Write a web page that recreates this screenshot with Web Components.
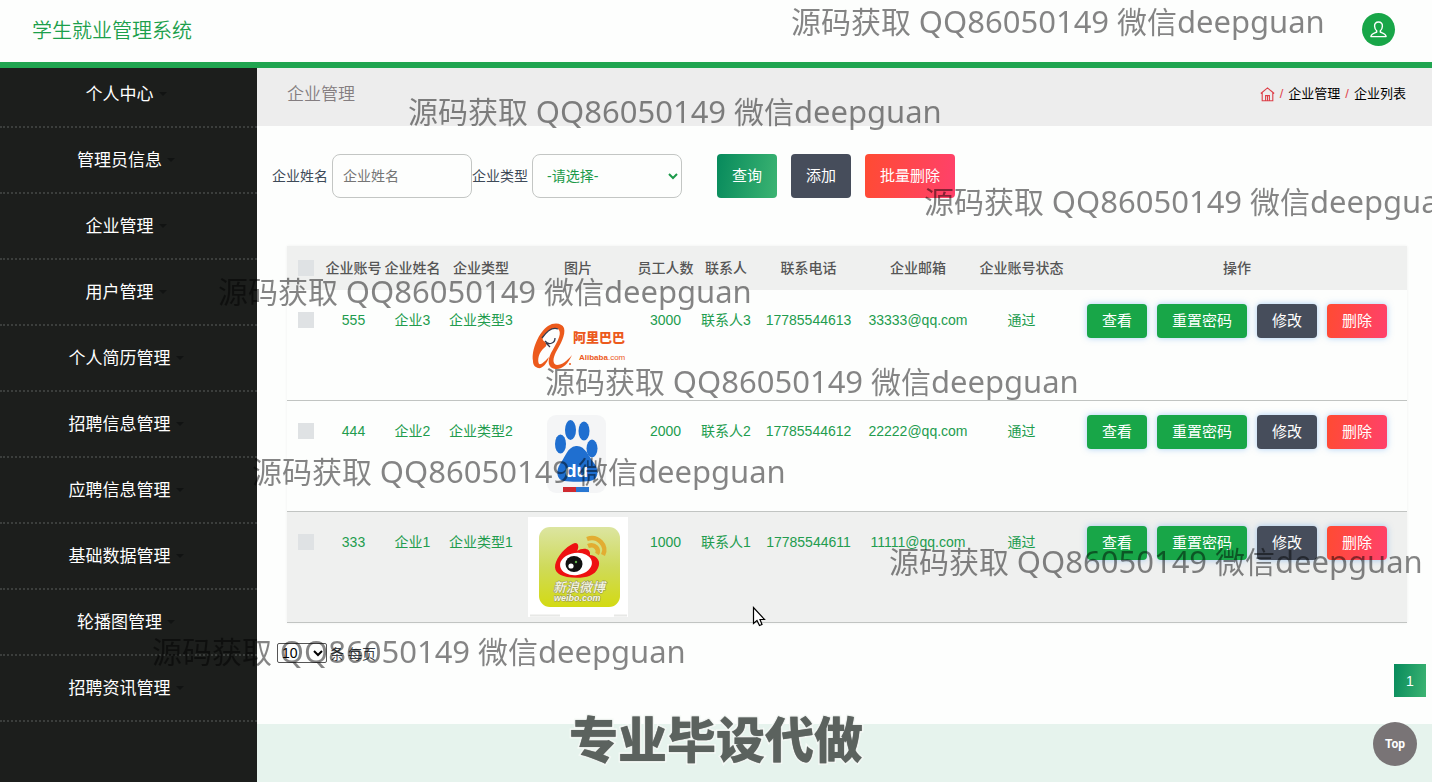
<!DOCTYPE html>
<html lang="zh-CN">
<head>
<meta charset="utf-8">
<title>学生就业管理系统</title>
<style>
html, body { margin: 0; }
body {
  font-family: "Liberation Sans", "Noto Sans CJK SC", sans-serif;
  font-size: 14px;
  background: #fdfefd;
}
</style>
</head>
<body>
<job-app></job-app>

<script>
const define = (name, html, setup) => {
  const template = document.createElement('template');
  template.innerHTML = html;
  customElements.define(name, class extends HTMLElement {
    connectedCallback() {
      if (this.shadowRoot) return;
      const root = this.attachShadow({ mode: 'open' });
      root.append(template.content.cloneNode(true));
      if (setup) setup(root, this);
    }
  });
};

/* Button with a colour variant and an optional compact size */
define('app-button', `
<style>
:host { display: inline-block; --fill: #18a648; }
:host([kind="search"]) { --fill: linear-gradient(100deg, #078a5c, #3cb472); }
:host([kind="dark"]) { --fill: #464d5b; }
:host([kind="danger"]) { --fill: linear-gradient(100deg, #ff4b32, #ff416c); }
button {
  display: block; height: 44px; padding: 0 15px; border: 0; border-radius: 4px;
  background: var(--fill); color: #fff; font: inherit; font-size: 15px; line-height: 20px;
  white-space: nowrap; cursor: pointer;
}
:host([compact]) button { height: 34px; box-shadow: 0 0 6px rgba(90, 160, 240, .5); }
</style>
<button type="button"><slot></slot></button>`);

define('app-header', `
<style>
:host {
  display: flex; align-items: center; justify-content: space-between; box-sizing: border-box;
  height: 68px; padding: 0 37px 4px 32px; border-bottom: 6px solid #20a550;
}
h1 { margin: 0; padding-top: 4px; font-size: 20px; line-height: 28px; font-weight: 350; color: #1c9f4b; }
button { width: 33px; height: 33px; padding: 0; border: 0; border-radius: 50%; background: #18a648; }
svg { display: block; margin: 0 auto; }
</style>
<h1><slot></slot></h1>
<button type="button" aria-label="个人账户">
  <svg width="21" height="21" viewBox="0 0 21 21" fill="none" stroke="#fff" stroke-width="1.4" stroke-linejoin="round">
    <path d="M10.500 3C7.800 3 6.400 4.900 6.600 7.300C6.700 9.300 7.600 11 8.700 11.800V13C6.500 14 3.200 14.600 2.900 17.600H18.100C17.800 14.600 14.500 14 12.300 13V11.800C13.400 11 14.300 9.300 14.400 7.300C14.600 4.900 13.200 3 10.500 3Z"/>
  </svg>
</button>`);

define('side-item', `
<style>
:host { display: block; border-bottom: 2px dotted #3b3e3c; }
a {
  display: flex; align-items: center; justify-content: center; box-sizing: border-box; height: 64px; padding-top: 2px;
  color: #fff; font-size: 17px; line-height: 24px; text-decoration: none;
}
:host(:first-of-type) a { height: 58px; padding: 0 0 4px; }
i { margin: 0 5px 2px; border: 4px solid transparent; border-top-color: #111312; border-bottom: 0; }
</style>
<a href="#"><slot></slot><i></i></a>`);

define('side-nav', `
<style>
:host { display: block; width: 257px; flex: none; background: #1c1e1c; }
</style>
<nav></nav>`, root => {
  const nav = root.querySelector('nav');
  for (const name of ['个人中心', '管理员信息', '企业管理', '用户管理', '个人简历管理',
    '招聘信息管理', '应聘信息管理', '基础数据管理', '轮播图管理', '招聘资讯管理']) {
    const item = document.createElement('side-item');
    item.textContent = name;
    nav.append(item);
  }
});

define('page-heading', `
<style>
:host {
  display: flex; align-items: center; justify-content: space-between; box-sizing: border-box;
  height: 58px; padding: 0 26px 6px 30px; background: #ededed;
}
h2 { margin: 0; padding-top: 2px; font-size: 17px; line-height: 24px; font-weight: 350; color: #847d80; }
nav { display: flex; align-items: center; gap: 5px; font-size: 13px; line-height: 20px; color: #e0444c; }
a { color: #000; text-decoration: none; }
svg { display: block; }
</style>
<h2>企业管理</h2>
<nav aria-label="位置">
  <a href="#" aria-label="首页"><svg width="15" height="15" viewBox="0 0 15 15" fill="none" stroke="#dd3f48" stroke-width="1.1"><path d="M.8 6.500L7.500.9L14.200 6.500M2.200 5.600V13.800H12.800V5.600M5.600 13.600V8.600H9.400V13.600M7.500 8.600V13.600"/></svg></a>
  <span>/</span><a href="#">企业管理</a><span>/</span><a href="#">企业列表</a>
</nav>`);

define('search-bar', `
<style>
:host { display: block; padding: 28px 15px 48px; }
form { display: flex; align-items: center; color: #3e4a58; line-height: 20px; }
input, select {
  box-sizing: border-box; height: 44px; margin-left: 4px; border: 1px solid #c3c6c4; border-radius: 8px;
  background: #fdfefd; font: inherit; font-size: 14px;
}
input { width: 140px; padding: 0 10px; }
input::placeholder { color: #757575; }
select { width: 150px; padding: 0 0 0 10px; color: #1c9a4a; }
.actions { display: flex; gap: 14px; margin-left: 35px; }
</style>
<form>
  <label for="name">企业姓名</label><input id="name" placeholder="企业姓名">
  <label for="type">企业类型</label><select id="type"><option>-请选择-</option></select>
  <div class="actions">
    <app-button kind="search">查询</app-button>
    <app-button kind="dark">添加</app-button>
    <app-button kind="danger">批量删除</app-button>
  </div>
</form>`);

const logos = {
  alibaba: `
<svg width="100" height="100" viewBox="0 0 100 100" role="img" aria-label="阿里巴巴">
  <path d="M5 66C3 55 11 37 20 31C26 27 34 28 36 33C38 40 32 50 28 57C25 63 24 69 29 70C34 70 39 66 44 60C40 69 34 75 27 74C20 73 19 66 23 58C28 49 34 40 31 35C28 31 20 35 16 40C14 43 14 45 17 47C19 49 19 51 16 53C11 57 9 65 11 69C14 70 18 65 21 62C19 69 14 74 10 73C7 72 5 70 5 66Z" fill="#ec5a1c"/>
  <path d="M14 43C19 36 25 32 30 34M17 46Q20 50 24 48Q27 47 27 43M18 48L22 52" fill="none" stroke="#33384a" stroke-width="1.300"/>
  <circle cx="42" cy="69" r="1" fill="#ec5a1c"/>
  <text x="45" y="47" font-size="13" font-weight="900" fill="#ec5a1c">阿里巴巴</text>
  <text x="51" y="65" font-size="8" font-weight="700" fill="#ec5a1c">Alibaba<tspan font-weight="400">.com</tspan></text>
</svg>`,
  baidu: `
<svg width="100" height="100" viewBox="0 0 100 100" role="img" aria-label="百度">
  <rect x="19" y="9" width="59" height="78" rx="9" fill="#f4f5f6"/>
  <g fill="#1f6fd0">
    <ellipse cx="42.500" cy="24" rx="5.500" ry="10"/><ellipse cx="56" cy="25" rx="5.500" ry="9.500"/>
    <ellipse cx="32.500" cy="38" rx="5.500" ry="9.500"/><ellipse cx="64" cy="42.500" rx="5.500" ry="9"/>
    <path d="M48 40C57 39 61 51 66 57C72 65 70 74 62 75C54 76 43 76 36 75C28 74 28 64 32 58C37 52 39 41 48 40Z"/>
  </g>
  <text x="37" y="71" font-size="19" font-weight="700" fill="#fff">du</text>
  <rect x="35" y="81" width="13" height="5" fill="#cf2a30"/><rect x="48" y="81" width="13" height="5" fill="#2877d2"/>
</svg>`,
  weibo: `
<svg width="100" height="100" viewBox="0 0 100 100" role="img" aria-label="新浪微博">
  <defs><linearGradient id="lime" x2="0" y2="1"><stop stop-color="#dce5a1"/><stop offset=".5" stop-color="#cfda5a"/><stop offset="1" stop-color="#d3da13"/></linearGradient></defs>
  <rect width="100" height="100" fill="#fff"/>
  <rect x="11" y="10" width="81" height="80" rx="11" fill="url(#lime)"/>
  <path d="M59 22C70 18 80 29 75 38M60 29C67 26 72 33 69 37" fill="none" stroke="#e2ad32" stroke-width="4.500"/>
  <path d="M28 45C31 36 42 27 47 26C52 26 50 33 49 34C55 30 63 31 62 38C70 39 73 45 70 51C66 61 51 62 39 60C29 58 25 53 28 45Z" fill="#ee1111"/>
  <ellipse cx="48" cy="47" rx="16" ry="11" transform="rotate(-8 48 47)" fill="#fff"/>
  <ellipse cx="46" cy="47" rx="8.500" ry="8" fill="#111"/>
  <circle cx="43" cy="49" r="2.600" fill="#fff"/><circle cx="48" cy="45" r="1.200" fill="#5fb04a"/>
  <g fill="#f6f7e4" stroke="#96965e" stroke-width="1" paint-order="stroke" font-style="italic" font-weight="700">
    <text x="25" y="75" font-size="13" font-weight="500">新浪微博</text>
    <text x="26" y="84" font-size="9">weibo.com</text>
  </g>
  <path d="M2 98.500H32M86 98.500H99" stroke="#e7e8e6" stroke-width="2"/>
</svg>`
};

const companies = [
  ['555', '企业3', '企业类型3', 'alibaba', '3000', '联系人3', '17785544613', '33333@qq.com'],
  ['444', '企业2', '企业类型2', 'baidu', '2000', '联系人2', '17785544612', '22222@qq.com'],
  ['333', '企业1', '企业类型1', 'weibo', '1000', '联系人1', '17785544611', '11111@qq.com']
];

define('company-table', `
<style>
:host { display: block; margin: 0 25px 0 30px; box-shadow: 0 0 3px rgba(0, 0, 0, .06); }
table { width: 100%; table-layout: fixed; border-collapse: separate; border-spacing: 0; text-align: center; line-height: 20px; }
th { height: 44px; padding: 0; background: #eff0ef; color: #555; font-weight: 500; white-space: nowrap; }
td { height: 90px; padding: 20px 0 0; border-bottom: 1px solid #c1c4c2; vertical-align: top; color: #229c4e; white-space: nowrap; }
tbody tr:last-child td { background: #eff0ef; }
td.logo { height: 100px; padding: 5px 0; }
td.ops { height: 96px; padding: 14px 0 0; }
.buttons { display: flex; justify-content: center; gap: 10px; }
svg { display: block; margin: 0 auto; }
input { appearance: none; display: block; width: 16px; height: 16px; margin: 2px auto; background: #dfe2e4; }
</style>
<table>
  <colgroup>
    <col style="width:37px"><col style="width:59px"><col style="width:59px"><col style="width:78px">
    <col style="width:116px"><col style="width:59px"><col style="width:62px"><col style="width:103px">
    <col style="width:116px"><col style="width:91px"><col style="width:340px">
  </colgroup>
  <thead><tr>
    <th><input type="checkbox" aria-label="全选"></th><th>企业账号</th><th>企业姓名</th><th>企业类型</th><th>图片</th>
    <th>员工人数</th><th>联系人</th><th>联系电话</th><th>企业邮箱</th><th>企业账号状态</th><th>操作</th>
  </tr></thead>
  <tbody></tbody>
</table>`, root => {
  root.querySelector('tbody').innerHTML = companies.map(row => `
    <tr><td><input type="checkbox" aria-label="选择${row[1]}"></td>
    ${row.map(cell => logos[cell] ? `<td class="logo">${logos[cell]}</td>` : `<td>${cell}</td>`).join('')}
    <td>通过</td>
    <td class="ops"><div class="buttons"><app-button compact>查看</app-button><app-button compact>重置密码</app-button><app-button compact kind="dark">修改</app-button><app-button compact kind="danger">删除</app-button></div></td></tr>`).join('');
});

define('table-pager', `
<style>
:host { display: block; padding: 20px 6px 27px 20px; }
.size { display: flex; align-items: center; gap: 3px; height: 20px; margin-bottom: 1px; color: #3a3f45; }
select { box-sizing: border-box; width: 50px; height: 20px; padding: 0 3px 0 0; border: 1px solid #555; border-radius: 2px; background: #fdfefd; font: inherit; color: #000; }
.pages { display: flex; justify-content: flex-end; }
button { width: 32px; height: 33px; padding: 0; border: 0; background: linear-gradient(100deg, #078a5c, #3cb472); color: #fff; font: inherit; }
</style>
<div class="size"><select id="size"><option>10</option></select><label for="size">条 每页</label></div>
<div class="pages"><button type="button">1</button></div>`);

define('app-footer', `
<style>
:host { display: block; flex: 1; min-height: 58px; background: #e6f3ed; }
</style>
<footer></footer>`);

define('back-to-top', `
<style>
:host { display: block; position: fixed; right: 15px; bottom: 16px; }
button { display: block; width: 44px; height: 44px; padding: 0; border: 0; border-radius: 50%; background: #797476; color: #fff; font: bold 12px/20px Roboto, sans-serif; }
</style>
<button type="button"><slot></slot></button>`);

/* Translucent contact lines, the slogan and the pointer float over the page */
define('page-overlay', `
<style>
:host { position: absolute; inset: 0; overflow: hidden; pointer-events: none; }
p, strong, svg { position: absolute; margin: 0; white-space: nowrap; }
p { font: 30px/40px "Noto Sans", "Noto Sans CJK SC", sans-serif; color: rgba(0, 0, 0, .48); }
p span { font-size: 31px; }
strong {
  left: 569px; top: 711px; font-size: 49px; line-height: 60px; font-weight: 900; color: #5b625e;
  -webkit-text-stroke: 3px #f6faf7; paint-order: stroke fill; text-shadow: 0 0 1px #888;
}
svg { left: 752px; top: 606px; }
</style>
<strong>专业毕设代做</strong>
<svg width="14" height="21" viewBox="0 0 14 21"><path d="M1.500 1.500V17.500L5 14.500L7.500 19.500L10 18.500L8 13.500H12.500Z" fill="#fff" stroke="#000" stroke-width="1.200"/></svg>`, root => {
  for (const [x, y] of [[791, 1], [408, 91], [924, 181], [218, 271], [545, 361], [252, 451], [889, 541], [152, 631]]) {
    const line = document.createElement('p');
    line.innerHTML = '源码获取 <span>QQ86050149</span> 微信<span>deepguan</span>';
    line.style.left = x + 'px';
    line.style.top = y + 'px';
    root.append(line);
  }
});

define('job-app', `
<style>
:host { position: relative; display: flex; flex-direction: column; min-height: 100vh; overflow: hidden; }
.body { display: flex; flex: 1; }
main { display: flex; flex: 1; flex-direction: column; min-width: 0; }
</style>
<app-header>学生就业管理系统</app-header>
<div class="body">
  <side-nav></side-nav>
  <main>
    <page-heading></page-heading>
    <search-bar></search-bar>
    <company-table></company-table>
    <table-pager></table-pager>
    <app-footer></app-footer>
  </main>
</div>
<back-to-top>Top</back-to-top>
<page-overlay></page-overlay>`);
</script>
</body>
</html>
